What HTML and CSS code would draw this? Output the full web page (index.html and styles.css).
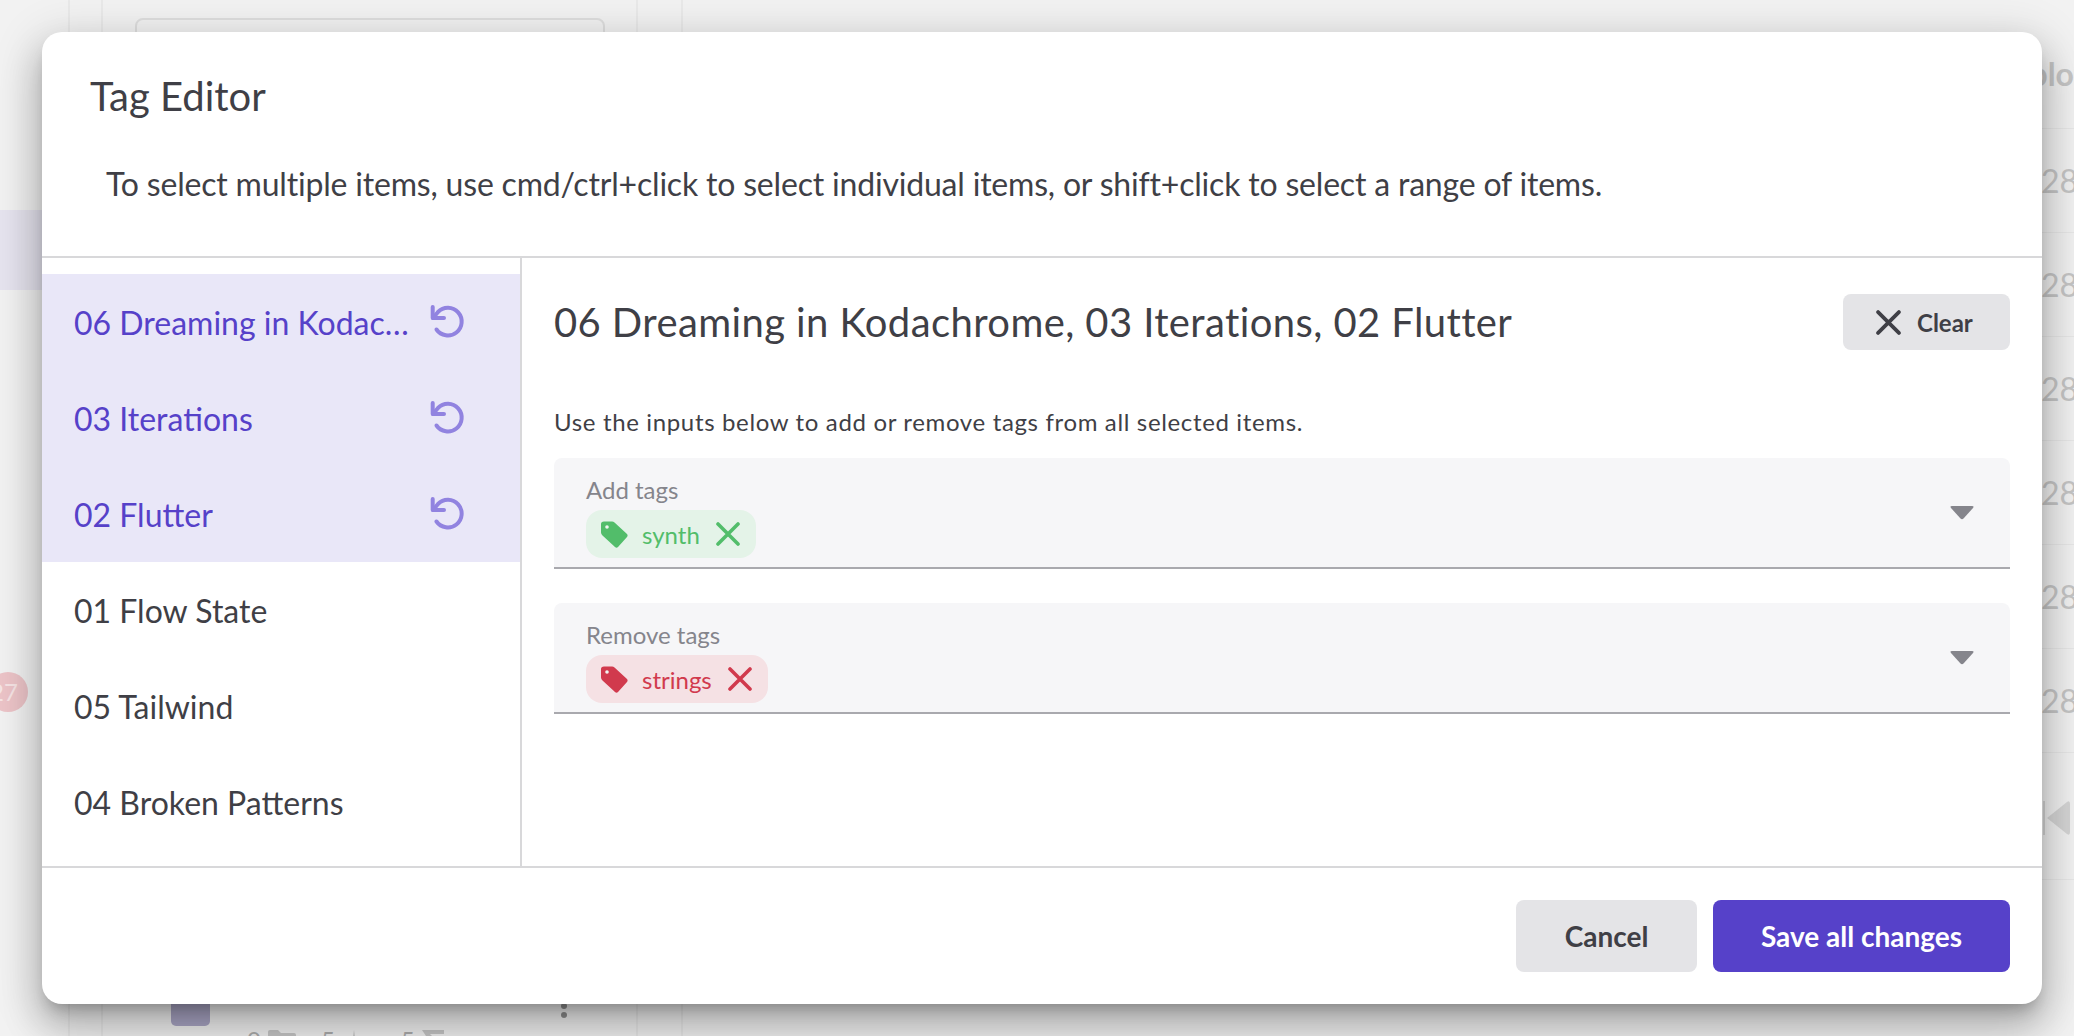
FILE: index.html
```html
<!DOCTYPE html>
<html lang="en">
<head>
    <meta charset="UTF-8">
    <meta name="viewport" content="width=device-width, initial-scale=1.0">
    <title>Tag Editor</title>
    <link rel="stylesheet" href="styles.css">
</head>
<body>
    <!-- dimmed page behind the dialog -->
    <div class="page">
        <div class="page-rail"></div>
        <div class="page-side">
            <div class="side-search"></div>
            <div class="side-row">
                <div class="side-thumb"></div>
                <div class="side-title">g</div>
                <div class="side-meta">
                    <span>0</span>
                    <svg width="28" height="20" viewBox="0 0 28 20"><path d="M0 2Q0 0 2 0H10L13 3H26Q28 3 28 5V20H0Z" /></svg>
                    <span>5</span>
                    <svg width="24" height="20" viewBox="0 0 24 20"><path d="M2 20 5 6 8 20M9 20 12 0 15 20M16 20 19 6 22 20" /></svg>
                    <span>5</span>
                    <svg width="22" height="20" viewBox="0 0 22 20"><path d="M0 0H22V4H8L16 12 10 20H0L8 12Z" /></svg>
                </div>
                <div class="side-dots"><i></i><i></i><i></i></div>
            </div>
        </div>
        <div class="page-main">
            <div class="main-head">plo</div>
            <div class="main-row">28/</div>
            <div class="main-row">28/</div>
            <div class="main-row">28/</div>
            <div class="main-row">28/</div>
            <div class="main-row">28/</div>
            <div class="main-row">28/</div>
            <div class="main-player">
                <svg width="28" height="34" viewBox="0 0 28 34"><path d="M0 0H2V34H0ZM4 17 24 1Q27-1 27 3V31Q27 35 24 33Z" /></svg>
            </div>
        </div>
        <div class="side-selected"></div>
        <div class="badge">27</div>
    </div>

    <div class="dialog">
        <div class="dialog-head">
            <h2>Tag Editor</h2>
            <p>To select multiple items, use cmd/ctrl+click to select individual items, or shift+click to select a range of items.</p>
        </div>
        <div class="dialog-body">
            <ul class="track-list">
                <li class="track selected">
                    <span class="track-name">06 Dreaming in Kodachrome</span>
                    <svg class="undo" viewBox="4 4 40 40"><path d="M12.500 31.500A13.800 13.800 0 1 0 14 14L9 20" /><path d="M8.700 9V20H20" /></svg>
                </li>
                <li class="track selected">
                    <span class="track-name">03 Iterations</span>
                    <svg class="undo" viewBox="4 4 40 40"><path d="M12.500 31.500A13.800 13.800 0 1 0 14 14L9 20" /><path d="M8.700 9V20H20" /></svg>
                </li>
                <li class="track selected">
                    <span class="track-name">02 Flutter</span>
                    <svg class="undo" viewBox="4 4 40 40"><path d="M12.500 31.500A13.800 13.800 0 1 0 14 14L9 20" /><path d="M8.700 9V20H20" /></svg>
                </li>
                <li class="track"><span class="track-name">01 Flow State</span></li>
                <li class="track"><span class="track-name">05 Tailwind</span></li>
                <li class="track"><span class="track-name">04 Broken Patterns</span></li>
            </ul>
            <div class="editor">
                <div class="editor-head">
                    <h3>06 Dreaming in Kodachrome, 03 Iterations, 02 Flutter</h3>
                    <button class="btn-clear">
                        <svg class="x" viewBox="0 0 24 24"><path d="M2 2 22 22M22 2 2 22" /></svg>
                        Clear
                    </button>
                </div>
                <p class="hint">Use the inputs below to add or remove tags from all selected items.</p>
                <div class="field">
                    <div class="field-inner">
                        <label>Add tags</label>
                        <span class="chip chip-add">
                            <svg class="tag" viewBox="0 0 27 27"><path d="M0 3Q0 .5 3 .5H11Q12.500 .5 13.500 1.500L26 13Q27.200 14.500 26 16L17 26Q15.500 27.300 14 26L1.500 14.500Q0 13 0 11.500Z" /><circle cx="6" cy="6" r="1.800" class="tag-hole" /></svg>
                            synth
                            <svg class="x" viewBox="0 0 24 24"><path d="M2 2 22 22M22 2 2 22" /></svg>
                        </span>
                    </div>
                    <svg class="caret" viewBox="0 0 24 14"><path d="M2 0H22Q24.500 0 23 2L13.500 12.500Q12 14 10.500 12.500L1 2Q-.5 0 2 0Z" /></svg>
                </div>
                <div class="field">
                    <div class="field-inner">
                        <label>Remove tags</label>
                        <span class="chip chip-remove">
                            <svg class="tag" viewBox="0 0 27 27"><path d="M0 3Q0 .5 3 .5H11Q12.500 .5 13.500 1.500L26 13Q27.200 14.500 26 16L17 26Q15.500 27.300 14 26L1.500 14.500Q0 13 0 11.500Z" /><circle cx="6" cy="6" r="1.800" class="tag-hole" /></svg>
                            strings
                            <svg class="x" viewBox="0 0 24 24"><path d="M2 2 22 22M22 2 2 22" /></svg>
                        </span>
                    </div>
                    <svg class="caret" viewBox="0 0 24 14"><path d="M2 0H22Q24.500 0 23 2L13.500 12.500Q12 14 10.500 12.500L1 2Q-.5 0 2 0Z" /></svg>
                </div>
            </div>
        </div>
        <div class="dialog-foot">
            <button class="btn btn-cancel">Cancel</button>
            <button class="btn btn-save">Save all changes</button>
        </div>
    </div>
</body>
</html>
```

FILE: styles.css
```css
* {
    box-sizing: border-box;
}
html, body {
    margin: 0;
    padding: 0;
    height: 100%;
    overflow: hidden;
}
body {
    font-family: Lato, "Open Sans", sans-serif;
    color: #3f3f46;
    background-color: #f2f2f2;
}

/* page behind the dialog */
.page {
    display: flex;
    height: 1036px;
    background-color: #f2f2f2;
}
.page-rail {
    width: 35px;
    flex-shrink: 0;
    margin-left: 68px;
    border-left: 2px solid #e9e9e9;
    border-right: 2px solid #e9e9e9;
}
.page-side {
    width: 580px;
    flex-shrink: 0;
    position: relative;
    padding: 18px 76px 0 32px;
    border-right: 2px solid #e9e9e9;
}
.page-side::after {
    content: "";
    position: absolute;
    top: 0;
    bottom: 0;
    left: 533px;
    border-left: 2px solid #e9e9e9;
}
.side-search {
    height: 40px;
    border: 2px solid #dedede;
    border-radius: 8px;
}
.side-selected {
    position: absolute;
    left: 0;
    top: 210px;
    width: 44px;
    height: 80px;
    background-color: rgba(86, 65, 201, 0.08);
}
.side-row {
    position: absolute;
    left: 68px;
    top: 960px;
    width: 400px;
    height: 76px;
}
.side-thumb {
    position: absolute;
    left: 0;
    top: 26px;
    width: 39px;
    height: 40px;
    border-radius: 5px;
    background-color: #aba7c6;
}
.side-title {
    position: absolute;
    left: 161px;
    top: 0;
    font-size: 32px;
    line-height: 40px;
    color: #9a9a9a;
}
.side-meta {
    position: absolute;
    left: 76px;
    top: 68px;
    display: flex;
    align-items: center;
    font-size: 24px;
    line-height: 24px;
    color: #adadad;
    white-space: nowrap;
}
.side-meta svg {
    margin-left: 7px;
    margin-right: 25px;
    fill: #c6c6c6;
}
.side-meta svg:nth-of-type(2) {
    margin-right: 35px;
}
.side-dots {
    position: absolute;
    left: 390px;
    top: 34px;
    display: flex;
    flex-direction: column;
    gap: 3px;
}
.side-dots i {
    width: 6px;
    height: 6px;
    border-radius: 50%;
    background-color: #8f8f8f;
}
.page-main {
    flex: 1;
    min-width: 0;
    overflow: hidden;
    display: flex;
    flex-direction: column;
    font-size: 32px;
    color: #c6c6c6;
}
.main-head {
    height: 129px;
    padding-top: 42px;
    text-align: right;
    line-height: 64px;
    font-weight: 700;
    border-bottom: 1px solid #e8e8e8;
}
.main-row {
    height: 104px;
    padding-top: 24px;
    padding-left: 1358px;
    line-height: 56px;
    white-space: nowrap;
    border-bottom: 1px solid #e8e8e8;
}
.main-player {
    height: 127px;
    padding-top: 48px;
    padding-left: 1360px;
    border-bottom: 1px solid #e8e8e8;
}
.main-player svg {
    fill: #d6d6d6;
}
.badge {
    position: absolute;
    left: -12px;
    top: 672px;
    width: 40px;
    height: 40px;
    padding-right: 8px;
    border-radius: 50%;
    background-color: #ecc4c8;
    color: #f6e4e5;
    font-size: 24px;
    line-height: 40px;
    text-align: center;
}

/* dialog */
.dialog {
    position: absolute;
    left: 42px;
    top: 32px;
    width: 2000px;
    height: 972px;
    display: flex;
    flex-direction: column;
    background-color: #fff;
    border-radius: 20px;
    box-shadow: 0 11px 15px -7px rgba(0, 0, 0, 0.25), 0 24px 38px 3px rgba(0, 0, 0, 0.2), 0 9px 46px 8px rgba(0, 0, 0, 0.12);
}
.dialog-head {
    height: 226px;
    flex-shrink: 0;
    padding: 32px 48px 0;
    border-bottom: 2px solid #d8d8da;
}
.dialog-head h2 {
    margin: 0;
    font-size: 40px;
    font-weight: 400;
    line-height: 64px;
}
.dialog-head p {
    margin: 36px 0 0 16px;
    font-size: 32px;
    line-height: 40px;
    letter-spacing: -0.19px;
}
.dialog-body {
    flex: 1;
    display: flex;
    min-height: 0;
}
.track-list {
    width: 480px;
    flex-shrink: 0;
    margin: 0;
    padding: 16px 0 0;
    list-style: none;
    border-right: 2px solid #d8d8da;
}
.track {
    display: flex;
    align-items: center;
    justify-content: space-between;
    height: 96px;
    padding: 0 52px 0 32px;
    font-size: 32px;
}
.track.selected {
    color: #5641c9;
    background-color: #e9e7f8;
}
.track-name {
    white-space: nowrap;
    overflow: hidden;
    text-overflow: ellipsis;
}
.undo {
    width: 40px;
    height: 40px;
    flex-shrink: 0;
    margin-left: 10px;
    fill: none;
    stroke: #9183e0;
    stroke-width: 4;
    stroke-linecap: round;
    stroke-linejoin: round;
}
.editor {
    flex: 1;
    padding: 36px 32px 0;
}
.editor-head {
    display: flex;
    align-items: center;
    justify-content: space-between;
    height: 56px;
}
.editor-head h3 {
    margin: 0;
    font-size: 40px;
    font-weight: 400;
    letter-spacing: 0.4px;
}
.btn-clear {
    display: flex;
    align-items: center;
    gap: 16px;
    width: 167px;
    height: 56px;
    padding: 0 0 0 33px;
    border: none;
    border-radius: 8px;
    background-color: #e4e4e7;
    color: #3f3f46;
    font-family: inherit;
    font-size: 24px;
    font-weight: 700;
}
.x {
    flex-shrink: 0;
    fill: none;
    stroke-width: 3.6;
    stroke: currentColor;
    stroke-linecap: round;
}
.btn-clear .x {
    width: 25px;
    height: 25px;
}
.hint {
    margin: 56px 0 0;
    font-size: 24px;
    line-height: 32px;
    letter-spacing: 0.65px;
}
.field {
    display: flex;
    align-items: center;
    justify-content: space-between;
    height: 111px;
    margin-top: 20px;
    padding: 0 32px;
    background-color: #f6f6f8;
    border-radius: 8px 8px 0 0;
    border-bottom: 2px solid #a9a9ae;
}
.field + .field {
    margin-top: 34px;
}
.field-inner {
    display: flex;
    flex-direction: column;
    align-items: flex-start;
    align-self: flex-start;
    padding-top: 16px;
}
.field-inner label {
    font-size: 24px;
    line-height: 32px;
    color: #85858c;
}
.chip {
    display: flex;
    align-items: center;
    height: 48px;
    margin-top: 4px;
    padding: 0 16px 0 15px;
    border-radius: 16px;
    font-size: 24px;
}
.chip-add {
    color: #52bd6a;
    background-color: #e4f3e8;
}
.chip-remove {
    color: #d13a4d;
    background-color: #f5e1e4;
}
.tag {
    width: 27px;
    height: 27px;
    margin-right: 14px;
    fill: currentColor;
}
.tag-hole {
    fill: #f0f6f1;
}
.chip .x {
    width: 24px;
    height: 24px;
    margin-left: 16px;
}
.caret {
    width: 24px;
    height: 14px;
    margin-right: 4px;
    fill: #85858c;
}
.dialog-foot {
    height: 138px;
    flex-shrink: 0;
    display: flex;
    justify-content: flex-end;
    gap: 16px;
    padding: 32px 32px 0;
    border-top: 2px solid #d8d8da;
}
.btn {
    height: 72px;
    border: none;
    border-radius: 8px;
    font-family: inherit;
    font-size: 28px;
    font-weight: 700;
}
.btn-cancel {
    width: 181px;
    background-color: #e4e4e7;
    color: #3f3f46;
}
.btn-save {
    width: 297px;
    background-color: #5641c9;
    color: #fff;
}
```
